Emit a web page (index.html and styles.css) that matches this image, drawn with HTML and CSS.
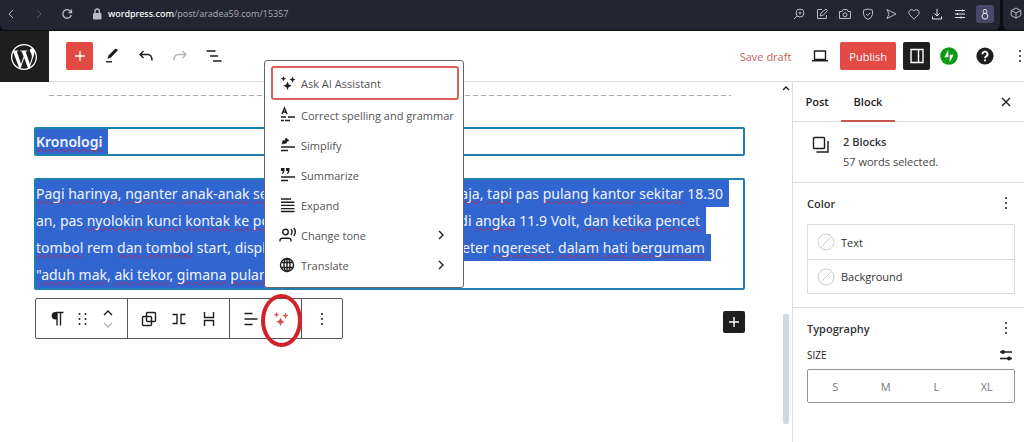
FILE: index.html
```
<!DOCTYPE html>
<html lang="id">
<head>
  <meta charset="UTF-8" />
  <meta name="viewport" content="width=device-width, initial-scale=1" />
  <title>Edit Post - aradea59.com</title>
  <link rel="stylesheet" href="styles.css">
</head>
<body>
  <div class="browser">
    <div class="browser-bar">
      <button class="nav" aria-label="Back"><svg class="i14" viewBox="0 0 14 14"><path d="M9 3L5 7l4 4"/></svg></button>
      <button class="nav nav-off" aria-label="Forward"><svg class="i14" viewBox="0 0 14 14"><path d="M5 3l4 4-4 4"/></svg></button>
      <button class="nav" aria-label="Reload"><svg class="i14" viewBox="0 0 14 14"><path d="M11 5A4.300 4.300 0 1 0 11.300 8M11.500 2.500V5.500H8.500" stroke-width="1.300"/></svg></button>
      <svg class="i14 lock" viewBox="0 0 14 14"><rect x="3" y="6" width="8.500" height="6.500" rx="1" fill="currentColor" stroke="none"/><path d="M5 6V4.200a2.200 2.200 0 0 1 4.400 0V6" stroke-width="1.400"/></svg>
      <span class="url"><b>wordpress.com</b>/post/aradea59.com/15357</span>
      <div class="tools">
        <svg class="i14" viewBox="0 0 14 14"><circle cx="8" cy="6" r="4"/><path d="M5 9L2 12M6.500 6h3M8 4.500v3"/></svg>
        <svg class="i14" viewBox="0 0 14 14"><path d="M7 2.500H2.500v9h9V8M5 9l1-3 5-4 1.500 1.500L8.500 8z"/></svg>
        <svg class="i14" viewBox="0 0 14 14"><path d="M1.500 4.500h2.500l1-2h4l1 2h2.500v7h-11z"/><circle cx="7" cy="7.800" r="2"/></svg>
        <svg class="i14" viewBox="0 0 14 14"><path d="M7 2l4.500 1.200v4Q11.500 10.500 7 12.500 2.500 10.500 2.500 7.200v-4zM5 7l1.600 1.500L9.200 5.800"/></svg>
        <svg class="i14" viewBox="0 0 14 14"><path d="M3 2.500L12 7l-9 4.500L5 7z"/></svg>
        <svg class="i14" viewBox="0 0 14 14"><path d="M7 12.200L2.300 7.300A2.900 2.900 0 0 1 7 3.900a2.900 2.900 0 0 1 4.700 3.400z"/></svg>
        <svg class="i14 bright" viewBox="0 0 14 14"><path d="M7 2v7M4.500 6.500L7 9l2.500-2.500M2.500 9.500v2.500h9V9.500"/></svg>
        <svg class="i14 bright" viewBox="0 0 14 14"><path d="M2 3.500h10M2 7h10M2 10.500h10M9.500 2.500v2M4.500 6v2M8 9.500v2"/></svg>
        <button class="profile" aria-label="Profile"><svg class="i14" viewBox="0 0 14 14"><circle cx="7" cy="4.500" r="2"/><circle cx="7" cy="9.200" r="2.900"/></svg></button>
      </div>
    </div>
    <div class="browser-side"><svg class="i14" viewBox="0 0 14 14"><path d="M7 2l4.800 2.500v5L7 12.200 2.200 9.500v-5zM2.200 4.500L7 7l4.800-2.500M7 7v5"/></svg></div>
  </div>

  <header class="header">
    <a class="logo" href="#" aria-label="WordPress">
      <svg viewBox="0 0 24 24"><path d="M21.469 6.825c.84 1.537 1.318 3.3 1.318 5.175 0 3.979-2.156 7.456-5.363 9.325l3.295-9.527c.615-1.54.82-2.771.82-3.864 0-.405-.026-.78-.07-1.11m-7.981.105c.647-.03 1.232-.105 1.232-.105.582-.075.514-.93-.067-.899 0 0-1.755.135-2.88.135-1.064 0-2.85-.15-2.85-.15-.585-.03-.661.855-.075.885 0 0 .54.061 1.125.09l1.68 4.605-2.37 7.08L5.354 6.9c.649-.03 1.234-.1 1.234-.1.585-.075.516-.93-.065-.896 0 0-1.746.138-2.874.138-.2 0-.438-.008-.69-.015C4.911 3.15 8.235 1.215 12 1.215c2.809 0 5.365 1.072 7.286 2.833-.046-.003-.091-.009-.141-.009-1.06 0-1.812.923-1.812 1.914 0 .89.513 1.643 1.06 2.531.411.72.89 1.643.89 2.977 0 .915-.354 1.994-.821 3.479l-1.075 3.585-3.9-11.61.001.014zM12 22.784c-1.059 0-2.081-.153-3.048-.437l3.237-9.406 3.315 9.087c.024.053.05.101.078.149-1.12.393-2.325.609-3.582.609M1.211 12c0-1.564.336-3.05.935-4.39L7.29 21.709C3.694 19.96 1.212 16.271 1.211 12M12 0C5.385 0 0 5.385 0 12s5.385 12 12 12 12-5.385 12-12S18.615 0 12 0"/></svg>
    </a>
    <div class="header-left">
      <button class="add" aria-label="Toggle block inserter"><svg class="i18" viewBox="0 0 18 18"><path d="M9 4v10M4 9h10"/></svg></button>
      <button aria-label="Tools"><svg class="i18" viewBox="0 0 18 18"><path d="M4.500 12l1-3.500 6.500-6.500q1.500-.8 2.800 1.200L8 10.500z" fill="currentColor" stroke="none"/><path d="M3 14.800h6"/></svg></button>
      <button aria-label="Undo"><svg class="i18" viewBox="0 0 18 18"><path d="M6.500 4L3 7.500 6.500 11M3 7.500h7.500q4.500 0 4.500 6"/></svg></button>
      <button class="off" aria-label="Redo"><svg class="i18" viewBox="0 0 18 18"><path d="M11.500 4L15 7.500 11.500 11M15 7.500H7.500Q3 7.500 3 13.500"/></svg></button>
      <button aria-label="Document overview"><svg class="i18" viewBox="0 0 18 18"><path d="M1.500 4h9M5 9h8M8 14h8.500"/></svg></button>
    </div>
    <div class="header-right">
      <button class="save">Save draft</button>
      <button class="laptop" aria-label="Preview"><svg class="i18" viewBox="0 0 18 18"><path d="M3.500 4h11v8.500h-11zM1 13.800h16"/></svg></button>
      <button class="publish">Publish</button>
      <button class="settings" aria-label="Settings"><svg class="i18" viewBox="0 0 18 18"><path d="M3 2.500h12v13H3zM10.500 2.500v13"/></svg></button>
      <button aria-label="Jetpack"><svg class="i18" viewBox="0 0 18 18"><circle cx="9" cy="9" r="8.800" fill="#0d9a12" stroke="none"/><path d="M8.300 2.800v7.500H4.400zM9.700 15.200V7.700h3.900z" fill="#fff" stroke="none"/></svg></button>
      <button aria-label="Help"><svg class="i18" viewBox="0 0 18 18"><circle cx="9" cy="9" r="8.600" fill="#1e1e1e" stroke="none"/><path d="M6.500 7.200a2.500 2.500 0 1 1 3.700 2.100Q9 10 9 11.200M9 12.500v1.800" stroke="#fff" stroke-width="1.900"/></svg></button>
      <button class="more" aria-label="Options"><svg class="dots" viewBox="0 0 4 18"><circle cx="2" cy="4" r="1"/><circle cx="2" cy="9" r="1"/><circle cx="2" cy="14" r="1"/></svg></button>
    </div>
  </header>

  <div class="layout">
    <main class="editor">
      <div class="canvas">
        <div class="dashes"></div>
        <h2 class="block"><span class="sel"><u>Kronologi</u></span></h2>
        <p class="block">
          <span class="sel"><u>Pagi</u> <u>harinya</u>, <u>nganter</u> <u>anak-anak</u> <u>sekolah</u> <u>dengan</u> <u>normal</u>, <u>lancar</u> <u>aja</u>, <u>tapi</u> pas <u>pulang</u> <u>kantor</u> <u>sekitar</u> 18.30</span>
          <span class="sel">an, pas <u>nyolokin</u> <u>kunci</u> <u>kontak</u> <u>ke</u> <u>posisi</u> on, <u>voltmeternya</u> <u>nunjuk</u> di <u>angka</u> 11.9 Volt, <u>dan</u> <u>ketika</u> <u>pencet</u></span>
          <span class="sel"><u>tombol</u> rem <u>dan</u> <u>tombol</u> start, display <u>padam</u>, <u>terus</u> <u>semua</u> odometer <u>ngereset</u>. <u>dalam</u> <u>hati</u> <u>bergumam</u></span>
          <span class="sel">"<u>aduh</u> <u>mak</u>, <u>aki</u> <u>tekor</u>, <u>gimana</u> <u>pulangnya</u> ini"</span>
        </p>
        <div class="below">
          <div class="toolbar">
            <div class="group">
              <button aria-label="Paragraph"><svg class="i18" viewBox="0 0 18 18"><path d="M8 2.500h7.500M9 2.500v13M12.500 2.500v13"/><path d="M9 2H7.500a3.800 3.800 0 0 0 0 7.600H9z" fill="currentColor" stroke="none"/></svg></button>
              <button class="slim" aria-label="Drag"><svg class="i18 fill" viewBox="0 0 18 18"><circle cx="5.500" cy="4" r="1"/><circle cx="5.500" cy="9" r="1"/><circle cx="5.500" cy="14" r="1"/><circle cx="11.500" cy="4" r="1"/><circle cx="11.500" cy="9" r="1"/><circle cx="11.500" cy="14" r="1"/></svg></button>
              <div class="movers">
                <button aria-label="Move up"><svg viewBox="0 0 12 8"><path d="M2 6l4-4 4 4"/></svg></button>
                <button class="off" aria-label="Move down"><svg viewBox="0 0 12 8"><path d="M2 2l4 4 4-4"/></svg></button>
              </div>
            </div>
            <div class="group">
              <button aria-label="Group"><svg class="i18" viewBox="0 0 18 18"><rect x="6.500" y="2.500" width="9" height="9" rx="1"/><rect x="2.500" y="6.500" width="9" height="9" rx="1"/></svg></button>
              <button aria-label="Row"><svg class="i18" viewBox="0 0 18 18"><path d="M2.500 4.500h4.500v9H2.500M15.500 4.500H11v9h4.500"/></svg></button>
              <button aria-label="Stack"><svg class="i18" viewBox="0 0 18 18"><path d="M4.500 2v5.500h9V2M4.500 16v-5.500h9V16"/></svg></button>
            </div>
            <div class="group">
              <button aria-label="Align"><svg class="i18" viewBox="0 0 18 18"><path d="M2.500 3.500h8M2.500 9h13M2.500 14.500h8"/></svg></button>
              <div class="ai">
                <button class="ai-button" aria-label="AI Assistant"><svg class="i18 fill" viewBox="0 0 18 18"><path d="M4.500 2l.8 2 2 .8-2 .8-.8 2-.8-2-2-.8 2-.8zM13.500 2.500l.9 2.200 2.200.9-2.200.9-.9 2.200-.9-2.200-2.200-.9 2.200-.9zM8.500 7.500l1.300 3 3 1.300-3 1.300-1.300 3-1.300-3-3-1.300 3-1.300z"/></svg></button>
                <div class="ring"></div>
                <div class="menu">
                  <button class="item focus"><svg class="i18 fill" viewBox="0 0 18 18"><path d="M4.500 2l.8 2 2 .8-2 .8-.8 2-.8-2-2-.8 2-.8zM13.500 2.500l.9 2.200 2.200.9-2.200.9-.9 2.200-.9-2.200-2.200-.9 2.200-.9zM8.500 7.500l1.300 3 3 1.300-3 1.300-1.300 3-1.300-3-3-1.300 3-1.300z"/></svg>Ask AI Assistant</button>
                  <button class="item"><svg class="i18" viewBox="0 0 18 18"><path d="M3 8l2.500-6L8 8M4 6h3M2 11h5M9 11h7M2 14.500h3M6 14.500h5"/></svg>Correct spelling and grammar</button>
                  <button class="item"><svg class="i18" viewBox="0 0 18 18"><path d="M3 8l1-3.500 1.500.5L7 2l3 2.500-2.500 1 .3 1.500z" fill="currentColor" stroke-width=".6"/><path d="M2 11h14M2 14.500h7"/></svg>Simplify</button>
                  <button class="item"><svg class="i18" viewBox="0 0 18 18"><path d="M2 2h3.500v3Q5 8 2.500 8.500L4 5H2zM7 2h3.500v3Q10 8 7.500 8.500L9 5H7z" fill="currentColor" stroke="none"/><path d="M2 11h14M2 14.500h7"/></svg>Summarize</button>
                  <button class="item"><svg class="i18" viewBox="0 0 18 18"><path d="M2 3h10M2 6.200h13.500M2 9.400h13.500M2 12.600h13.500M2 15.500h13.500"/></svg>Expand</button>
                  <button class="item"><svg class="i18" viewBox="0 0 18 18"><circle cx="6.500" cy="6" r="2.800"/><path d="M1 15.500v-1.200q0-2 2.500-2h6q2.500 0 2.500 2v1.200M12 3q2 3 0 6M14.800 2q3 4 0 8"/></svg>Change tone<svg class="chev" viewBox="0 0 8 12"><path d="M2 2l4 4-4 4"/></svg></button>
                  <button class="item"><svg class="i18" viewBox="0 0 18 18"><circle cx="8" cy="9" r="6.500"/><ellipse cx="8" cy="9" rx="3" ry="6.500"/><path d="M8 2.500v13M2.300 6.500h11.500M2.300 11.500h11.500"/></svg>Translate<svg class="chev" viewBox="0 0 8 12"><path d="M2 2l4 4-4 4"/></svg></button>
                </div>
              </div>
            </div>
            <div class="group last">
              <button aria-label="Options"><svg class="dots" viewBox="0 0 4 18"><circle cx="2" cy="4" r="1"/><circle cx="2" cy="9" r="1"/><circle cx="2" cy="14" r="1"/></svg></button>
            </div>
          </div>
          <button class="append" aria-label="Add block"><svg class="i18" viewBox="0 0 18 18"><path d="M9 4v10M4 9h10"/></svg></button>
        </div>
      </div>
      <div class="rail">
        <svg viewBox="0 0 8 6"><path d="M1 5l3-3 3 3"/></svg>
        <div class="thumb"></div>
      </div>
    </main>

    <aside class="sidebar">
      <div class="tabs">
        <button class="tab">Post</button>
        <button class="tab active">Block</button>
        <button class="close" aria-label="Close settings"><svg class="i18" viewBox="0 0 18 18"><path d="M5 5l8 8M13 5l-8 8"/></svg></button>
      </div>
      <section class="card">
        <svg class="i18" viewBox="0 0 18 18"><rect x="1.500" y="1.500" width="11" height="11" rx="1"/><path d="M16 5v11H4.500"/></svg>
        <div>
          <h3>2 Blocks</h3>
          <p>57 words selected.</p>
        </div>
      </section>
      <section class="panel color">
        <div class="panel-head"><h3>Color</h3><button aria-label="Color options"><svg class="dots" viewBox="0 0 4 18"><circle cx="2" cy="4" r="1"/><circle cx="2" cy="9" r="1"/><circle cx="2" cy="14" r="1"/></svg></button></div>
        <div class="swatches">
          <button><svg class="i18" viewBox="0 0 18 18"><circle cx="9" cy="9" r="8"/><path d="M3.500 14.500l11-11"/></svg>Text</button>
          <button><svg class="i18" viewBox="0 0 18 18"><circle cx="9" cy="9" r="8"/><path d="M3.500 14.500l11-11"/></svg>Background</button>
        </div>
      </section>
      <section class="panel">
        <div class="panel-head"><h3>Typography</h3><button aria-label="Typography options"><svg class="dots" viewBox="0 0 4 18"><circle cx="2" cy="4" r="1"/><circle cx="2" cy="9" r="1"/><circle cx="2" cy="14" r="1"/></svg></button></div>
        <div class="size-head"><span>SIZE</span><button aria-label="Set custom size"><svg class="i14" viewBox="0 0 14 14"><path d="M1 4h12M1 10.500h12" stroke-width="1.500"/><circle cx="4" cy="4" r="2" fill="currentColor" stroke="none"/><circle cx="10" cy="10.500" r="2" fill="currentColor" stroke="none"/></svg></button></div>
        <div class="sizes"><button>S</button><button>M</button><button>L</button><button>XL</button></div>
      </section>
    </aside>
  </div>
</body>
</html>
```
FILE: styles.css
```
* {
  box-sizing: border-box;
}

html, body {
  margin: 0;
  height: 100%;
}

body {
  display: flex;
  flex-direction: column;
  font-family: "Open Sans", "Noto Sans", sans-serif;
  font-size: 11px;
  color: #1e1e1e;
  background: #fff;
  overflow: hidden;
}

button {
  display: flex;
  align-items: center;
  justify-content: center;
  padding: 0;
  border: none;
  background: none;
  font: inherit;
  color: inherit;
  cursor: pointer;
}

h2, h3, p {
  margin: 0;
}

svg {
  display: block;
  flex: none;
  fill: none;
  stroke: currentColor;
  stroke-width: 1.4;
}

.i14 {
  width: 14px;
  height: 14px;
  stroke-width: 1;
}

.i18 {
  width: 18px;
  height: 18px;
}

.dots {
  width: 4px;
  height: 18px;
}

.dots, .fill {
  fill: currentColor;
  stroke: none;
}

.off {
  color: #b4b4b4;
}

/* browser chrome */
.browser {
  display: flex;
  gap: 3px;
  height: 31px;
  padding-bottom: 1px;
  background: #0c0c14;
  color: #b9bbc6;
}

.browser-bar {
  flex: 1;
  display: flex;
  align-items: center;
  padding: 0 6px 3px 4px;
  background: #232533;
  border-radius: 0 0 6px 6px;
}

.nav {
  width: 14px;
  margin-right: 14px;
}

.nav:nth-child(3) {
  margin-right: 16px;
}

.nav-off {
  color: #555869;
}

.lock {
  margin-right: 4px;
}

.url {
  font-family: "Noto Sans", sans-serif;
  font-size: 9px;
  color: #a3a5b0;
}

.url b {
  font-weight: 500;
  color: #fff;
}

.tools {
  display: flex;
  align-items: center;
  gap: 9px;
  margin-left: auto;
}

.bright {
  color: #e4e5ea;
}

.profile {
  width: 18px;
  height: 18px;
  border-radius: 3px;
  background: #47496a;
  color: #e4e5ea;
}

.browser-side {
  width: 21px;
  padding: 6px 0 0 6px;
  background: #232533;
  border-radius: 0 0 0 6px;
  overflow: hidden;
}

/* editor header */
.header {
  display: flex;
  height: 51px;
  border-bottom: 1px solid #dcdcdc;
}

.logo {
  display: flex;
  align-items: center;
  justify-content: center;
  width: 49px;
  height: 51px;
  padding-right: 2px;
  background: #1e1e1e;
}

.logo svg {
  width: 26px;
  height: 26px;
  fill: #fff;
  stroke: none;
}

.header-left, .header-right {
  display: flex;
  align-items: center;
}

.header-left {
  gap: 16px;
  padding-left: 17px;
}

.header-right {
  margin-left: auto;
}

.add {
  width: 27px;
  height: 28px;
  margin-right: -6px;
  border-radius: 2px;
  background: #e24a43;
  color: #fff;
}

.save {
  margin-right: 20px;
  color: #c4625c;
}

.laptop {
  margin-right: 11px;
}

.publish {
  height: 28px;
  padding: 0 9px;
  margin-right: 7px;
  border-radius: 2px;
  background: #e24a43;
  color: #fff;
}

.settings {
  width: 27px;
  height: 28px;
  margin-right: 10px;
  border-radius: 2px;
  background: #1e1e1e;
  color: #fff;
}

.header-right [aria-label="Help"] {
  margin-left: 18px;
}

.more {
  margin: 0 2px 0 24px;
}

/* canvas */
.layout {
  flex: 1;
  display: flex;
  min-height: 0;
}

.editor {
  flex: 1;
  display: flex;
  min-width: 0;
}

.canvas {
  flex: 1;
  min-width: 0;
  padding: 13px 35px 0 34px;
}

.dashes {
  height: 1px;
  margin: 0 14px 0 15px;
  background: repeating-linear-gradient(90deg, #aaa 0 5px, transparent 5px 8px);
}

.block {
  border: 2px solid #1f7fae;
  border-radius: 2px;
  font-family: "Noto Sans", "Open Sans", sans-serif;
  font-size: 14px;
  line-height: 27px;
  white-space: nowrap;
}

h2.block {
  margin-top: 31px;
  font-weight: 600;
  line-height: 25px;
}

p.block {
  margin-top: 22px;
}

.sel {
  display: block;
  width: fit-content;
  padding-right: 6px;
  background: #3165d0;
  color: #f2f5ff;
}

/* spell checker marks */
.sel u {
  text-decoration: underline wavy #b02a5c 1px;
  text-decoration-skip-ink: none;
  text-underline-offset: 1px;
}

.below {
  display: flex;
  align-items: flex-start;
  justify-content: space-between;
  margin-top: 8px;
}

.toolbar {
  display: flex;
  height: 41px;
  margin-left: 1px;
  border: 1px solid #555;
  border-radius: 2px;
}

.group {
  display: flex;
  align-items: center;
  padding: 0 5px 0 6px;
  border-right: 1px solid #555;
}

.group > button, .ai-button {
  width: 30px;
  height: 39px;
}

.group > .slim {
  width: 22px;
}

.movers {
  width: 28px;
  display: flex;
  flex-direction: column;
  align-items: center;
  gap: 4px;
}

.movers svg {
  width: 12px;
  height: 8px;
}

.last {
  padding: 0;
  border-right: none;
}

.group.last > button {
  width: 40px;
}

.ai {
  position: relative;
}

.ai-button {
  color: #dc4a43;
}

.ring {
  position: absolute;
  left: -5px;
  top: -5px;
  width: 41px;
  height: 53px;
  border: 4px solid #d3222a;
  border-radius: 50%;
  pointer-events: none;
}

.menu {
  position: absolute;
  left: -2px;
  bottom: 50px;
  width: 200px;
  padding: 5px 4px 7px 6px;
  border: 1px solid #666;
  border-radius: 3px;
  background: #fff;
}

.item {
  width: 100%;
  height: 30px;
  padding: 0 12px 0 6px;
  gap: 4px;
  justify-content: flex-start;
  border: 2px solid transparent;
  border-radius: 3px;
  color: #555;
  white-space: nowrap;
}

.item svg {
  color: #1e1e1e;
}

.focus {
  height: 34px;
  border-color: #d9605a;
}

.item .chev {
  width: 8px;
  height: 12px;
  margin-left: auto;
}

.append {
  width: 22px;
  height: 22px;
  margin-top: 13px;
  border-radius: 2px;
  background: #1e1e1e;
  color: #fff;
}

.rail {
  display: flex;
  flex-direction: column;
  align-items: center;
  width: 12px;
  padding-top: 3px;
}

.rail svg {
  width: 8px;
  height: 6px;
}

.thumb {
  width: 6px;
  height: 110px;
  margin-top: 223px;
  border-radius: 2px;
  background: #d0d8e0;
}

/* settings sidebar */
.sidebar {
  width: 232px;
  border-left: 1px solid #dcdcdc;
}

.tabs {
  display: flex;
  height: 40px;
  border-bottom: 1px solid #dcdcdc;
}

.tab {
  width: 48px;
  height: 40px;
  border-bottom: 2px solid transparent;
  font-weight: 600;
}

.active {
  width: 54px;
  border-color: #c9554f;
}

.close {
  margin: 0 9px 0 auto;
}

.card {
  display: flex;
  gap: 13px;
  height: 61px;
  padding: 10px 19px;
  border-bottom: 1px solid #dcdcdc;
  line-height: 20px;
}

.card svg {
  margin-top: 4px;
}

h3 {
  font-size: 11px;
  font-weight: 600;
  color: #333;
}

.card p {
  color: #444;
}

.panel {
  padding: 11px 9px 0 14px;
}

.color {
  padding-bottom: 13px;
  border-bottom: 1px solid #dcdcdc;
}

.panel-head, .size-head {
  display: flex;
  align-items: center;
  justify-content: space-between;
  height: 18px;
  padding-right: 7px;
}

.size-head {
  height: 20px;
  margin: 8px 0 4px;
  padding-right: 2px;
  font-size: 10px;
}

.swatches {
  margin-top: 12px;
  border: 1px solid #dcdcdc;
}

.swatches button {
  width: 100%;
  height: 34px;
  padding-left: 9px;
  gap: 6px;
  justify-content: flex-start;
  color: #333;
}

.swatches button + button {
  border-top: 1px solid #dcdcdc;
}

.swatches svg {
  stroke: #ccc;
  stroke-width: 1;
}

.sizes {
  display: flex;
  height: 34px;
  padding: 0 2px;
  border: 1px solid #949494;
  border-radius: 2px;
}

.sizes button {
  flex: 1;
  color: #777;
}
```
